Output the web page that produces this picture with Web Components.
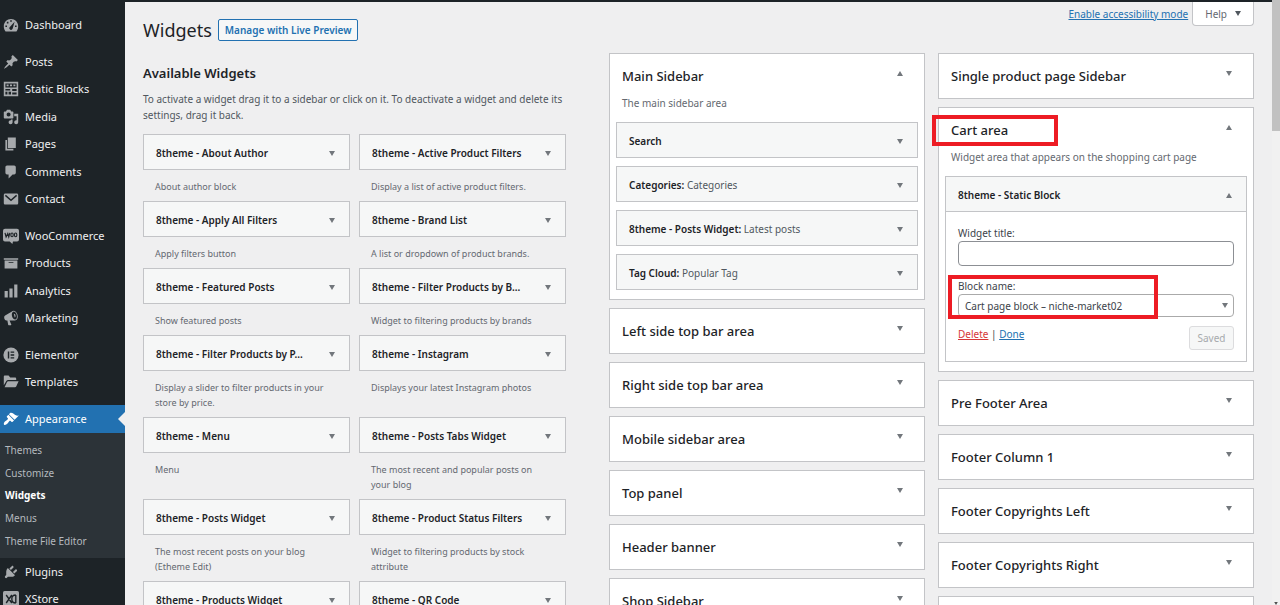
<!DOCTYPE html>
<html lang="en">
<head>
<meta charset="utf-8">
<meta name="viewport" content="width=device-width, initial-scale=1">
<title>Widgets</title>
<style>
  html, body { margin: 0; height: 100%; }
  body { background: #efeff0; color: #3c434a; font: 10px/16px "Noto Sans", "Open Sans", sans-serif; overflow: hidden; }
</style>
</head>
<body>
<widgets-screen></widgets-screen>

<script>
const define = (name, html, setup) => {
  const template = document.createElement('template');
  template.innerHTML = '<style>*{box-sizing:border-box}a{color:#2271b1}button{font:inherit;margin:0}</style>' + html;
  customElements.define(name, class extends HTMLElement {
    connectedCallback() {
      if (this.shadowRoot) return;
      this.attachShadow({ mode: 'open' }).append(template.content.cloneNode(true));
      if (setup) setup(this, this.shadowRoot);
    }
  });
};

const ICONS = {
  dashboard: '<path fill-rule="evenodd" d="M3.200 18h13.600c1.500-1.800 2.200-4 2.200-6.500C19 6.500 15 2.500 10 2.500s-9 4-9 9c0 2.500.7 4.700 2.200 6.500zM9 4h2v2H9zM4.800 6h2v2h-2zM3 10.500h2v2H3zM15 10.500h2v2h-2zM8 13.200L14.500 6l-2.500 8.800a2.100 2.100 0 1 1-4-1.600z"/>',
  post: '<path d="M10.44 3.02l1.82-1.82 6.36 6.35-1.83 1.82c-1.05-.68-2.48-.57-3.41.36l-.75.75c-.92.93-1.04 2.35-.35 3.41l-1.83 1.82-2.41-2.41-2.8 2.790c-.42.42-3.38 2.71-3.8 2.290s1.86-3.39 2.28-3.81l2.790-2.790L4.100 9.360l1.830-1.820c1.050.69 2.480.57 3.400-.36l.75-.75c.93-.92 1.050-2.350.36-3.410z"/>',
  blocks: '<path fill-rule="evenodd" d="M1 1h18v18H1zM3 3v5h14V3zM3 10v2h6v-2zM3 13.500V17h2.500v-3.500zM7 13.500V17h3v-3.500zM11.500 10v2.500H17V10zM11.500 14.500V17H17v-2.500z"/><path d="M4.500 4.500h2.500v2H4.500zM8.700 4.500h2.600v2H8.700zM13 4.500h2.500v2H13z"/>',
  media: '<path d="M13 11V4c0-.55-.45-1-1-1h-1.670L9 1H5L3.670 3H2c-.55 0-1 .45-1 1v7c0 .55.45 1 1 1h10c.55 0 1-.45 1-1zM7 4.500c1.380 0 2.500 1.120 2.500 2.500S8.380 9.500 7 9.500 4.500 8.380 4.500 7 5.620 4.500 7 4.500zM14 6h5v10.500c0 1.380-1.120 2.500-2.500 2.500S14 17.880 14 16.500s1.120-2.500 2.500-2.500c.17 0 .34.02.5.05V9h-3V6zm-4 8.050V13h2v3.500c0 1.380-1.120 2.500-2.500 2.500S7 17.880 7 16.500 8.120 14 9.500 14c.17 0 .34.02.5.05z"/>',
  page: '<path d="M6 15V2h10v13H6zm-1 1h8v2H3V5h2v11z"/>',
  comment: '<path d="M5 2h9c1.100 0 2 .9 2 2v7c0 1.100-.9 2-2 2h-2l-5 5v-5H5c-1.100 0-2-.9-2-2V4c0-1.100.9-2 2-2z"/>',
  email: '<path d="M3 3h14c1.300 0 2 .7 2 2v10c0 1.300-.7 2-2 2H3c-1.300 0-2-.7-2-2V5c0-1.300.7-2 2-2z"/><path d="M3 5.500l7 6 7-6" fill="none" stroke="#1d2327" stroke-width="1.800"/>',
  woo: '<path d="M2.500 1h15A2.500 2.500 0 0 1 20 3.500v11a2.500 2.500 0 0 1-2.500 2.500h-5l-.8 3-3.300-3H2.500A2.500 2.500 0 0 1 0 14.500v-11A2.500 2.500 0 0 1 2.500 1z"/><path d="M2.500 6l1.400 5L6 7l1.200 4L8.600 6" fill="none" stroke="#1d2327" stroke-width="1.500"/><ellipse cx="11.300" cy="8.600" rx="1.500" ry="2.300" fill="none" stroke="#1d2327" stroke-width="1.400"/><ellipse cx="15.800" cy="8.600" rx="1.500" ry="2.300" fill="none" stroke="#1d2327" stroke-width="1.400"/>',
  archive: '<path d="M19 4v2H1V4h18zM2 7h16v10H2V7zm11 3V9H7v1h6z"/>',
  chart: '<path d="M18 18V2h-4v16h4zm-6 0V7H8v11h4zm-6 0v-8H2v8h4z"/>',
  megaphone: '<path d="M18.150 5.940c.46 1.620.38 3.220-.02 4.480-.42 1.280-1.260 2.180-2.300 2.480-.16.06-.26.06-.4.06-.06.02-.12.02-.18.02-.06.02-.14.02-.22.02h-6.800l2.220 5.500c.02.14-.06.26-.14.34-.08.1-.24.16-.34.16H6.950c-.1 0-.26-.06-.34-.16-.08-.08-.16-.2-.14-.34l-1-5.500H4.250l-.02-.02c-.5.06-1.080-.18-1.540-.62s-.88-1.080-1.060-1.880c-.24-.8-.2-1.560-.02-2.200.18-.62.58-1.080 1.060-1.300l.02-.02 9-5.400c.1-.06.18-.1.24-.16.06-.04.14-.08.24-.12.16-.08.28-.12.5-.18 1.040-.3 2.240.1 3.220.98s1.840 2.240 2.260 3.860zm-2.580 5.980h-.02c.4-.1.74-.34 1.040-.7.58-.7.86-1.760.86-3.040 0-.64-.1-1.300-.28-1.980-.34-1.360-1.020-2.500-1.780-3.240s-1.680-1.100-2.460-.88c-.82.22-1.400.96-1.700 2-.32 1.040-.28 2.360.06 3.720.38 1.360 1 2.500 1.800 3.240.78.74 1.620 1.100 2.480.88z"/><path d="M13.500 4.800c1.800-.4 3.200 3.700 1.200 4.600z"/>',
  elementor: '<circle cx="10" cy="10" r="9.500"/><path d="M6 5.500h1.800v9H6zM9.500 5.500H14v1.800H9.500zM9.500 9.100H14v1.800H9.500zM9.500 12.700H14v1.800H9.500z" fill="#1d2327"/>',
  folder: '<path d="M1 3.500c0-.8.600-1.500 1.500-1.500H7l2 2.500h6c.8 0 1.500.600 1.500 1.500v1.500H6.500c-1 0-1.800.5-2.300 1.300L1 14z"/><path d="M6.500 9H19.500l-3 6.500c-.3.600-.8 1-1.500 1H2l3-6.500c.3-.6.800-1 1.500-1z"/>',
  brush: '<path d="M14.480 11.060L7.410 3.990l1.500-1.500c.5-.56 2.300-.47 3.510.32 1.210.8 1.430 1.280 2.910 2.100 1.180.64 2.450 1.260 4.450.85zm-.71.71L6.700 4.700 4.930 6.470c-.39.39-.39 1.020 0 1.410l1.060 1.060c.39.39.39 1.030 0 1.420-.6.6-1.430 1.110-2.210 1.690-.35.26-.7.53-1.010.84C1.430 14.230.4 16.080 1.400 17.070c.99 1 2.840-.03 4.180-1.360.31-.31.58-.66.85-1.020.57-.78 1.080-1.610 1.690-2.210.39-.39 1.020-.39 1.410 0l1.060 1.060c.39.39 1.020.39 1.410 0z"/>',
  plug: '<path d="M13.110 4.360L9.870 7.600 8 5.730l3.240-3.240c.35-.34 1.050-.2 1.560.32.52.51.66 1.210.31 1.550zm-8 1.770l.91-1.120 9.010 9.010-1.190.84c-.71.71-2.630 1.160-3.820 1.160H6.140L4.900 17.260c-.59.59-1.540.59-2.120 0-.59-.58-.59-1.530 0-2.120l1.240-1.240v-3.880c0-1.130.4-3.190 1.090-3.890zm7.260 3.970l3.240-3.240c.34-.35 1.040-.21 1.550.31.52.51.66 1.210.31 1.550l-3.240 3.250z"/>',
  xstore: '<rect x="0" y="0" width="20" height="20" rx="2"/><path d="M4 5l7 10M11 5L4 15M16 5c-4 0-5 2-5 5s1 5 5 5M16 5v10" fill="none" stroke="#1d2327" stroke-width="1.700"/>'
};

/* A small disclosure triangle; the "up" attribute flips it. */
define('arrow-mark', `<style>
  :host { display: block; width: 6px; height: 5px; flex: none; color: #72777c; }
  svg { display: block; width: 100%; height: 100%; }
  :host([up]) svg { transform: rotate(180deg); }
  </style><svg viewBox="0 0 6 5" fill="currentColor" aria-hidden="true"><path d="M0 0h6L3 5z"/></svg>`);

define('menu-item', `<style>
  :host { display: block; }
  a { display: flex; align-items: center; gap: 6px; height: 100%; padding-left: 3px; color: #f0f0f1; font-size: 11px; text-decoration: none; white-space: nowrap; position: relative; }
  svg { width: 16px; height: 16px; flex: none; color: #a7aaad; fill: currentColor; }
  :host([current]) a { background: #2271b1; color: #fff; }
  :host([current]) svg { color: #fff; }
  :host([current]) a::after { content: ""; position: absolute; right: 0; top: 50%; margin-top: -7px; border: 7px solid transparent; border-left: 0; border-right-color: #efeff0; }
  </style><a href="#"><svg viewBox="0 0 20 20" aria-hidden="true"></svg><slot></slot></a>`,
  (host, root) => { root.querySelector('svg').innerHTML = ICONS[host.getAttribute('icon')]; });

define('menu-group', `<style>
  :host { display: grid; grid-auto-rows: 1fr; height: 28px; margin-bottom: 9px; }
  :host([size="2"]) { height: 55px; }
  :host([size="4"]) { height: 110px; }
  :host([size="6"]) { height: 165px; }
  :host([current]) { margin-bottom: 0; }
  </style><slot></slot>`);

define('admin-menu', `<style>
  :host { display: block; background: #1d2327; padding-top: 11px; overflow: hidden; }
  ul { display: grid; grid-auto-rows: 1fr; height: 125px; margin: 0; padding: 6px 0 6px 5px; list-style: none; background: #2c3338; }
  li { display: flex; align-items: center; }
  li a { color: #b4b9be; text-decoration: none; }
  li a[aria-current] { color: #fff; font-weight: 700; }
  </style>
  <nav aria-label="Main menu">
    <menu-group><menu-item icon="dashboard">Dashboard</menu-item></menu-group>
    <menu-group size="6">
      <menu-item icon="post">Posts</menu-item>
      <menu-item icon="blocks">Static Blocks</menu-item>
      <menu-item icon="media">Media</menu-item>
      <menu-item icon="page">Pages</menu-item>
      <menu-item icon="comment">Comments</menu-item>
      <menu-item icon="email">Contact</menu-item>
    </menu-group>
    <menu-group size="4">
      <menu-item icon="woo">WooCommerce</menu-item>
      <menu-item icon="archive">Products</menu-item>
      <menu-item icon="chart">Analytics</menu-item>
      <menu-item icon="megaphone">Marketing</menu-item>
    </menu-group>
    <menu-group size="2">
      <menu-item icon="elementor">Elementor</menu-item>
      <menu-item icon="folder">Templates</menu-item>
    </menu-group>
    <menu-group current><menu-item icon="brush" current>Appearance</menu-item></menu-group>
    <ul>
      <li><a href="#">Themes</a></li>
      <li><a href="#">Customize</a></li>
      <li><a href="#" aria-current="page">Widgets</a></li>
      <li><a href="#">Menus</a></li>
      <li><a href="#">Theme File Editor</a></li>
    </ul>
    <menu-group size="2">
      <menu-item icon="plug">Plugins</menu-item>
      <menu-item icon="xstore">XStore</menu-item>
    </menu-group>
  </nav>`);

/* Header bar of one widget, with an optional body when open. */
define('widget-card', `<style>
  :host { display: block; background: #fff; border: 1px solid #c3c4c7; color: #1d2327; }
  button { display: flex; align-items: center; justify-content: space-between; width: 100%; height: 34px; padding: 2px 14px 0 12px; border: 0; background: #f6f7f7; color: inherit; text-align: left; white-space: nowrap; }
  b { font-weight: 600; }
  .in { color: #50575e; }
  :host([open]) button { border-bottom: 1px solid #c3c4c7; height: 35px; }
  </style>
  <button type="button"><span><b></b> <span class="in"></span></span><arrow-mark></arrow-mark></button>
  <slot></slot>`,
  (host, root) => {
    root.querySelector('b').textContent = host.getAttribute('name');
    root.querySelector('.in').textContent = host.getAttribute('note') || '';
    const open = host.hasAttribute('open');
    root.querySelector('button').setAttribute('aria-expanded', open);
    root.querySelector('arrow-mark').toggleAttribute('up', open);
  });

define('available-widget', `<style>
  :host { display: block; }
  p { margin: 0; padding: 9px 20px 7px 12px; font-size: 9px; line-height: 15px; color: #646970; }
  </style><widget-card></widget-card><p><slot></slot></p>`,
  (host, root) => {
    const card = document.createElement('widget-card');
    card.setAttribute('name', host.getAttribute('name'));
    root.querySelector('widget-card').replaceWith(card);
  });

define('available-list', `<style>
  :host { display: block; padding-top: 10px; min-width: 0; }
  h2 { margin: 0; font-size: 13px; line-height: 20px; font-weight: 600; color: #1d2327; }
  .intro { margin: 8px 0 11px; color: #50575e; }
  .list { display: grid; grid-template-columns: 1fr 1fr; column-gap: 9px; }
  </style>
  <h2>Available Widgets</h2>
  <p class="intro">To activate a widget drag it to a sidebar or click on it. To deactivate a widget and delete its settings, drag it back.</p>
  <div class="list">
    <available-widget name="8theme - About Author">About author block</available-widget>
    <available-widget name="8theme - Active Product Filters">Display a list of active product filters.</available-widget>
    <available-widget name="8theme - Apply All Filters">Apply filters button</available-widget>
    <available-widget name="8theme - Brand List">A list or dropdown of product brands.</available-widget>
    <available-widget name="8theme - Featured Posts">Show featured posts</available-widget>
    <available-widget name="8theme - Filter Products by B...">Widget to filtering products by brands</available-widget>
    <available-widget name="8theme - Filter Products by P...">Display a slider to filter products in your store by price.</available-widget>
    <available-widget name="8theme - Instagram">Displays your latest Instagram photos</available-widget>
    <available-widget name="8theme - Menu">Menu</available-widget>
    <available-widget name="8theme - Posts Tabs Widget">The most recent and popular posts on your blog</available-widget>
    <available-widget name="8theme - Posts Widget">The most recent posts on your blog (Etheme Edit)</available-widget>
    <available-widget name="8theme - Product Status Filters">Widget to filtering products by stock attribute</available-widget>
    <available-widget name="8theme - Products Widget"></available-widget>
    <available-widget name="8theme - QR Code"></available-widget>
  </div>`);

/* One widget area: titled panel, with its widgets slotted in when open. */
define('widget-area', `<style>
  :host { display: block; position: relative; background: #fff; border: 1px solid #c3c4c7; }
  h2 { margin: 0; font-size: 13px; line-height: 20px; font-weight: 500; color: #1d2327; }
  button { display: flex; justify-content: space-between; width: 100%; height: 44px; padding: 12px 21px 12px 12px; border: 0; background: none; font-weight: inherit; color: inherit; line-height: inherit; text-align: left; }
  arrow-mark { margin-top: 5px; }
  .body { display: none; padding: 0 6px 9px; }
  p { margin: 0; padding: 1px 6px 11px; color: #646970; }
  .stack { display: grid; gap: 8px; }
  :host([note]) button { height: 40px; }
  :host([note]) .body { display: block; }
  .mark { display: none; position: absolute; left: -7px; top: 7px; width: 126px; height: 31px; border: 4px solid #ed1c24; pointer-events: none; }
  :host([marked]) .mark { display: block; }
  </style>
  <h2><button type="button"><span></span><arrow-mark></arrow-mark></button></h2>
  <div class="body"><p></p><div class="stack"><slot></slot></div></div>
  <div class="mark"></div>`,
  (host, root) => {
    const open = host.hasAttribute('note');
    root.querySelector('button span').textContent = host.getAttribute('name');
    root.querySelector('p').textContent = host.getAttribute('note') || '';
    root.querySelector('button').setAttribute('aria-expanded', open);
    root.querySelector('arrow-mark').toggleAttribute('up', open);
  });

define('static-block-form', `<style>
  :host { display: block; padding: 13px 12px 11px; color: #3c434a; }
  form { position: relative; }
  label { display: block; line-height: 16px; }
  input { display: block; width: 100%; height: 25px; border: 1px solid #8c8f94; border-radius: 4px; background: #fff; font: inherit; }
  .field { margin-top: 12px; }
  .pick { position: relative; display: block; }
  select { display: block; appearance: none; width: 100%; height: 23px; padding: 0 24px 0 6px; border: 1px solid #aaa; border-radius: 4px; background: #fff; color: #3c434a; font: inherit; line-height: 20px; }
  .pick arrow-mark { position: absolute; right: 6px; top: 9px; pointer-events: none; }
  .actions { display: flex; justify-content: space-between; align-items: flex-start; padding-top: 9px; }
  .delete { color: #d63638; }
  button { width: 45px; height: 24px; padding: 0; border: 1px solid #dcdcde; border-radius: 3px; background: #f6f7f7; color: #a7aaad; }
  .mark { position: absolute; left: -10px; top: 50px; width: 210px; height: 44px; border: 4px solid #ed1c24; pointer-events: none; }
  </style>
  <form>
    <label for="title">Widget title:</label>
    <input id="title" type="text">
    <label class="field" for="block">Block name:</label>
    <span class="pick"><select id="block"><option>Cart page block – niche-market02</option></select><arrow-mark></arrow-mark></span>
    <div class="actions">
      <span><a class="delete" href="#">Delete</a> | <a href="#">Done</a></span>
      <button type="button" disabled>Saved</button>
    </div>
    <div class="mark"></div>
  </form>`);

define('area-columns', `<style>
  :host { display: grid; grid-template-columns: 1fr 1fr; column-gap: 13px; align-items: start; }
  .col { display: grid; gap: 8px; }
  </style>
  <div class="col">
    <widget-area name="Main Sidebar" note="The main sidebar area">
      <widget-card name="Search"></widget-card>
      <widget-card name="Categories:" note="Categories"></widget-card>
      <widget-card name="8theme - Posts Widget:" note="Latest posts"></widget-card>
      <widget-card name="Tag Cloud:" note="Popular Tag"></widget-card>
    </widget-area>
    <widget-area name="Left side top bar area"></widget-area>
    <widget-area name="Right side top bar area"></widget-area>
    <widget-area name="Mobile sidebar area"></widget-area>
    <widget-area name="Top panel"></widget-area>
    <widget-area name="Header banner"></widget-area>
    <widget-area name="Shop Sidebar"></widget-area>
  </div>
  <div class="col">
    <widget-area name="Single product page Sidebar"></widget-area>
    <widget-area name="Cart area" note="Widget area that appears on the shopping cart page" marked>
      <widget-card name="8theme - Static Block" open><static-block-form></static-block-form></widget-card>
    </widget-area>
    <widget-area name="Pre Footer Area"></widget-area>
    <widget-area name="Footer Column 1"></widget-area>
    <widget-area name="Footer Copyrights Left"></widget-area>
    <widget-area name="Footer Copyrights Right"></widget-area>
    <widget-area name=""></widget-area>
  </div>`);

define('page-header', `<style>
  :host { display: flex; justify-content: space-between; align-items: flex-start; height: 51px; }
  .title { display: flex; align-items: center; gap: 6px; height: 22px; margin-top: 17px; }
  h1 { margin: 0; font-size: 18px; line-height: 24px; font-weight: 400; color: #1d2327; }
  .live { height: 22px; padding: 0 6px; border: 1px solid #2271b1; border-radius: 2px; background: #f6f7f7; line-height: 20px; font-weight: 600; text-decoration: none; white-space: nowrap; }
  .tools { display: flex; gap: 4px; line-height: 24px; }
  .help { display: flex; align-items: center; gap: 8px; height: 24px; padding: 0 12px; border: 1px solid #c3c4c7; border-top: 0; border-radius: 0 0 4px 4px; background: #fff; color: #646970; }
  .help arrow-mark { color: #50575e; }
  </style>
  <div class="title"><h1>Widgets</h1><a class="live" href="#">Manage with Live Preview</a></div>
  <div class="tools"><a href="#">Enable accessibility mode</a><button class="help" type="button">Help <arrow-mark></arrow-mark></button></div>`);

define('scroll-rail', `<style>
  :host { display: flex; flex-direction: column; justify-content: space-between; background: #f1f1f1; overflow: hidden; }
  .thumb { height: 131px; background: #c1c1c1; }
  arrow-mark { align-self: center; height: 3px; color: #505050; }
  </style><div class="thumb"></div><arrow-mark></arrow-mark>`);

define('widgets-screen', `<style>
  :host { display: grid; grid-template-columns: 125px minmax(0, 1fr) 8px; height: 100vh; overflow: hidden; }
  main { border-top: 2px solid #1d2327; padding: 0 18px; min-width: 0; overflow: hidden; }
  .cols { display: grid; grid-template-columns: minmax(0, 423fr) minmax(0, 645fr); column-gap: 43px; align-items: start; }
  </style>
  <admin-menu></admin-menu>
  <main>
    <page-header></page-header>
    <div class="cols"><available-list></available-list><area-columns></area-columns></div>
  </main>
  <scroll-rail></scroll-rail>`);
</script>
</body>
</html>
